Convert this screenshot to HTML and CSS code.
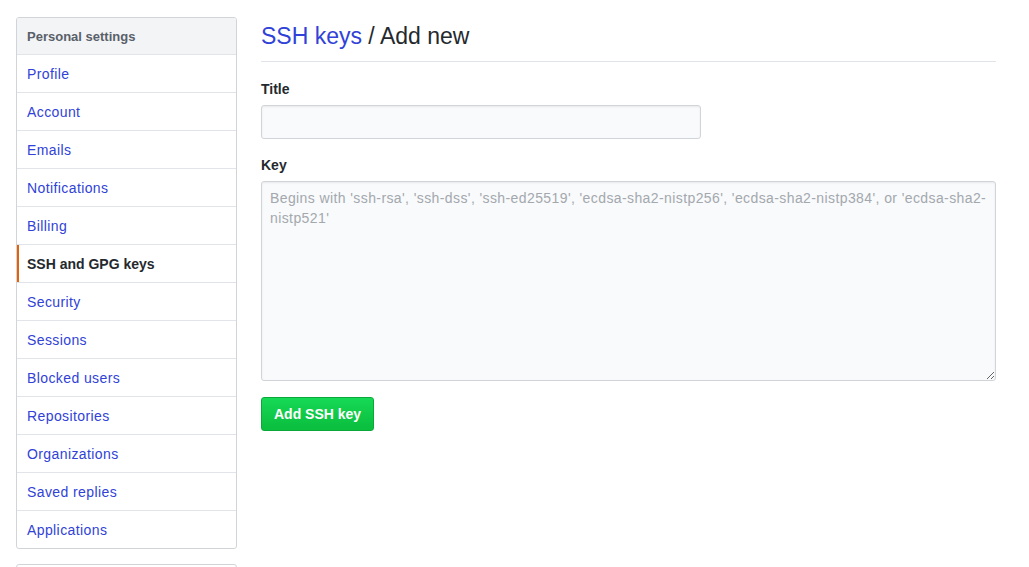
FILE: index.html
```html
<!DOCTYPE html>
<html lang="en">
<head>
<meta charset="utf-8">
<title>SSH keys / Add new</title>
<link rel="stylesheet" href="styles.css">
</head>
<body>
<div class="page">
  <aside class="sidebar">
    <nav class="menu">
      <div class="menu-heading">Personal settings</div>
      <a class="menu-item" href="#">Profile</a>
      <a class="menu-item" href="#">Account</a>
      <a class="menu-item" href="#">Emails</a>
      <a class="menu-item" href="#">Notifications</a>
      <a class="menu-item" href="#">Billing</a>
      <a class="menu-item selected" href="#">SSH and GPG keys</a>
      <a class="menu-item" href="#">Security</a>
      <a class="menu-item" href="#">Sessions</a>
      <a class="menu-item" href="#">Blocked users</a>
      <a class="menu-item" href="#">Repositories</a>
      <a class="menu-item" href="#">Organizations</a>
      <a class="menu-item" href="#">Saved replies</a>
      <a class="menu-item" href="#">Applications</a>
    </nav>
    <div class="menu menu-second"></div>
  </aside>
  <main class="main">
    <h1 class="subhead"><a href="#">SSH keys</a> / Add new</h1>
    <form class="form">
      <div class="form-group">
        <label class="label" for="title">Title</label>
        <input class="input input-title" id="title" type="text">
      </div>
      <div class="form-group">
        <label class="label" for="key">Key</label>
        <textarea class="input input-key" id="key" placeholder="Begins with 'ssh-rsa', 'ssh-dss', 'ssh-ed25519', 'ecdsa-sha2-nistp256', 'ecdsa-sha2-nistp384', or 'ecdsa-sha2-nistp521'"></textarea>
      </div>
      <button class="btn-primary" type="button">Add SSH key</button>
    </form>
  </main>
</div>
</body>
</html>
```
FILE: styles.css
```css
* { box-sizing: border-box; }
html, body { margin: 0; padding: 0; background: #fff; }
body {
  font-family: "Liberation Sans", Arial, sans-serif;
  font-size: 14px;
  line-height: 21px;
  color: #24292e;
  overflow: hidden;
}
.page {
  display: flex;
  align-items: flex-start;
  gap: 24px;
  padding: 17px 16px 0 16px;
}
.sidebar {
  width: 221px;
  flex: none;
  display: flex;
  flex-direction: column;
  gap: 15px;
}
.menu {
  display: flex;
  flex-direction: column;
  border: 1px solid #d1d5da;
  border-radius: 3px;
  background: #fff;
  overflow: hidden;
}
.menu-second { height: 40px; }
.menu-heading {
  padding: 8px 10px 7px 10px;
  background: #f3f4f6;
  color: #586069;
  font-size: 13px;
  font-weight: bold;
  line-height: 21px;
}
.menu-item {
  display: block;
  padding: 9px 10px 7px 10px;
  border-top: 1px solid #e1e4e8;
  color: #3042d8;
  text-decoration: none;
  line-height: 21px;
  letter-spacing: 0.4px;
}
.menu-item.selected {
  color: #24292e;
  font-weight: bold;
  letter-spacing: 0;
  box-shadow: inset 2px 0 0 #e36209;
}
.main {
  width: 735px;
  flex: none;
}
.subhead {
  margin: 0;
  padding-top: 1px;
  padding-bottom: 7px;
  border-bottom: 1px solid #e1e4e8;
  font-size: 23px;
  line-height: 36px;
  font-weight: normal;
  color: #24292e;
}
.subhead a { color: #3042d8; text-decoration: none; }
.form {
  padding-top: 17px;
  display: flex;
  flex-direction: column;
  align-items: flex-start;
}
.form-group {
  display: flex;
  flex-direction: column;
  margin-bottom: 16px;
  width: 100%;
}
.label {
  font-weight: bold;
  font-size: 14px;
  line-height: 21px;
  margin-bottom: 5px;
}
.input {
  font-family: inherit;
  font-size: 14px;
  line-height: 20px;
  padding: 6px 8px;
  background: #f9fafb;
  border: 1px solid #d1d5da;
  border-radius: 3px;
  color: #24292e;
  box-shadow: inset 0 1px 2px rgba(27, 31, 35, 0.075);
  outline: none;
}
.input-title { width: 440px; height: 34px; }
.input-key { width: 735px; height: 200px; resize: vertical; letter-spacing: 0.4px; }
.input-key::placeholder { color: #a3a8ae; }
.btn-primary {
  margin-top: 0;
  font-family: inherit;
  font-size: 14px;
  font-weight: bold;
  line-height: 20px;
  padding: 6px 12px;
  height: 34px;
  color: #fff;
  background: linear-gradient(#16d955, #0bbf3f 90%);
  border: 1px solid #0aa83a;
  border-radius: 3px;
}
```
